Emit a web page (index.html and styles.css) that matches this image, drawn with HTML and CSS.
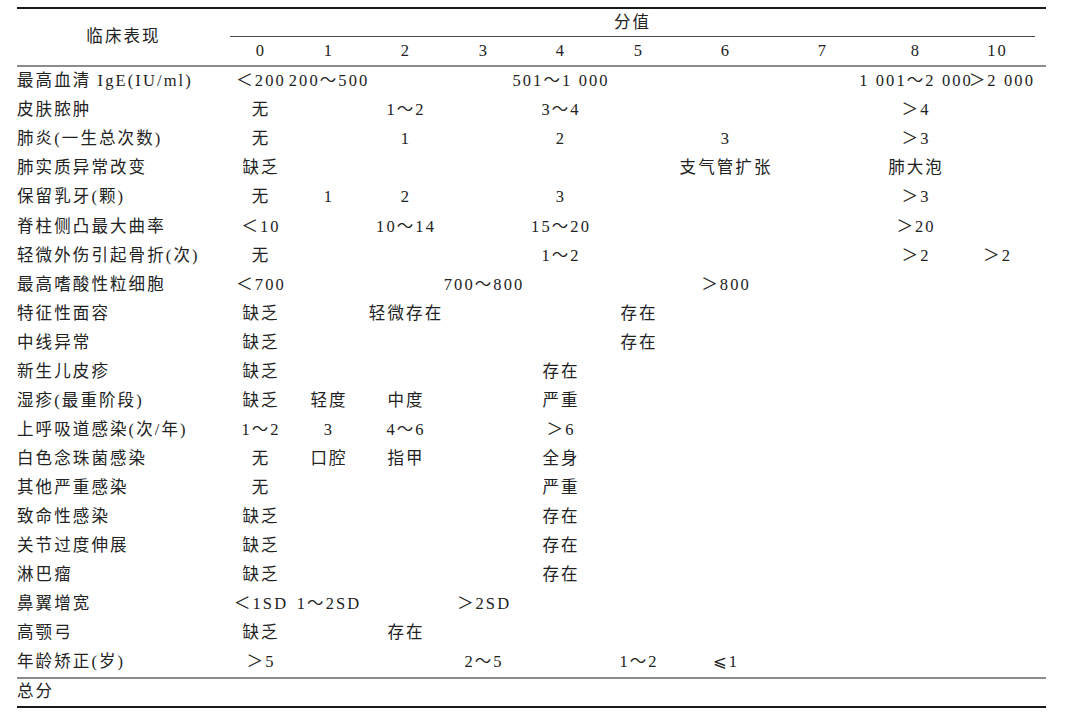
FILE: index.html
```html
<!DOCTYPE html>
<html lang="zh-CN">
<head>
<meta charset="utf-8">
<title>评分表</title>
<link rel="stylesheet" href="styles.css">
</head>
<body>
<div class="table">
  <div class="head">
    <div class="h-label">临床表现</div>
    <div class="h-group">分值</div>
    <div class="s c0">0</div>
    <div class="s c1">1</div>
    <div class="s c2">2</div>
    <div class="s c3">3</div>
    <div class="s c4">4</div>
    <div class="s c5">5</div>
    <div class="s c6">6</div>
    <div class="s c7">7</div>
    <div class="s c8">8</div>
    <div class="s c9">10</div>
  </div>
  <div class="body">
    <div class="row"><div class="label">最高血清 IgE(IU/ml)</div><div class="s c0">＜200</div><div class="s c1">200～500</div><div class="s c4">501～1 000</div><div class="s c8">1 001～2 000</div><div class="s c9 end">＞2 000</div></div>
    <div class="row"><div class="label">皮肤脓肿</div><div class="s c0">无</div><div class="s c2">1～2</div><div class="s c4">3～4</div><div class="s c8">＞4</div></div>
    <div class="row"><div class="label">肺炎(一生总次数)</div><div class="s c0">无</div><div class="s c2">1</div><div class="s c4">2</div><div class="s c6">3</div><div class="s c8">＞3</div></div>
    <div class="row"><div class="label">肺实质异常改变</div><div class="s c0">缺乏</div><div class="s c6">支气管扩张</div><div class="s c8">肺大泡</div></div>
    <div class="row"><div class="label">保留乳牙(颗)</div><div class="s c0">无</div><div class="s c1">1</div><div class="s c2">2</div><div class="s c4">3</div><div class="s c8">＞3</div></div>
    <div class="row"><div class="label">脊柱侧凸最大曲率</div><div class="s c0">＜10</div><div class="s c2">10～14</div><div class="s c4">15～20</div><div class="s c8">＞20</div></div>
    <div class="row"><div class="label">轻微外伤引起骨折(次)</div><div class="s c0">无</div><div class="s c4">1～2</div><div class="s c8">＞2</div><div class="s c9">＞2</div></div>
    <div class="row"><div class="label">最高嗜酸性粒细胞</div><div class="s c0">＜700</div><div class="s c3">700～800</div><div class="s c6">＞800</div></div>
    <div class="row"><div class="label">特征性面容</div><div class="s c0">缺乏</div><div class="s c2">轻微存在</div><div class="s c5">存在</div></div>
    <div class="row"><div class="label">中线异常</div><div class="s c0">缺乏</div><div class="s c5">存在</div></div>
    <div class="row"><div class="label">新生儿皮疹</div><div class="s c0">缺乏</div><div class="s c4">存在</div></div>
    <div class="row"><div class="label">湿疹(最重阶段)</div><div class="s c0">缺乏</div><div class="s c1">轻度</div><div class="s c2">中度</div><div class="s c4">严重</div></div>
    <div class="row"><div class="label">上呼吸道感染(次/年)</div><div class="s c0">1～2</div><div class="s c1">3</div><div class="s c2">4～6</div><div class="s c4">＞6</div></div>
    <div class="row"><div class="label">白色念珠菌感染</div><div class="s c0">无</div><div class="s c1">口腔</div><div class="s c2">指甲</div><div class="s c4">全身</div></div>
    <div class="row"><div class="label">其他严重感染</div><div class="s c0">无</div><div class="s c4">严重</div></div>
    <div class="row"><div class="label">致命性感染</div><div class="s c0">缺乏</div><div class="s c4">存在</div></div>
    <div class="row"><div class="label">关节过度伸展</div><div class="s c0">缺乏</div><div class="s c4">存在</div></div>
    <div class="row"><div class="label">淋巴瘤</div><div class="s c0">缺乏</div><div class="s c4">存在</div></div>
    <div class="row"><div class="label">鼻翼增宽</div><div class="s c0">＜1SD</div><div class="s c1">1～2SD</div><div class="s c3">＞2SD</div></div>
    <div class="row"><div class="label">高颚弓</div><div class="s c0">缺乏</div><div class="s c2">存在</div></div>
    <div class="row"><div class="label">年龄矫正(岁)</div><div class="s c0">＞5</div><div class="s c3">2～5</div><div class="s c5">1～2</div><div class="s c6">⩽1</div></div>
  </div>
  <div class="foot">
    <div class="label">总分</div>
  </div>
</div>
</body>
</html>
```

FILE: styles.css
```css
html, body {
  margin: 0;
  padding: 0;
  background: #ffffff;
}

body {
  font-family: "Liberation Serif", "Noto Sans CJK SC", "DejaVu Serif", "DejaVu Sans", serif;
  font-size: 16.5px;
  letter-spacing: 2.1px;
  color: #222222;
}

.table {
  --cols: 213px 60px 76px 78px 78px 76px 80px 94px 100px 86px 77px 11px;
  width: 1029px;
  margin: 7px 0 0 17px;
  border-top: 2px solid #1a1a1a;
  border-bottom: 2px solid #1a1a1a;
}

.head {
  display: grid;
  grid-template-columns: var(--cols);
  grid-template-rows: 28px 28px;
  border-bottom: 2px solid #8c8c8c;
  align-items: center;
}

.h-label {
  grid-column: 1;
  grid-row: 1 / 3;
  justify-self: center;
  line-height: 1;
}

.h-group {
  grid-column: 2 / 12;
  grid-row: 1;
  align-self: stretch;
  display: flex;
  align-items: center;
  justify-content: center;
  border-bottom: 1px solid #4a4a4a;
  line-height: 1;
  padding-top: 1px;
}

.head .s {
  grid-row: 2;
}

.row {
  display: grid;
  grid-template-columns: var(--cols);
  height: 29.05px;
  align-items: center;
}

.label {
  grid-column: 1;
  white-space: nowrap;
  line-height: 1;
}

.s {
  justify-self: center;
  white-space: nowrap;
  line-height: 1;
  padding-left: 2.1px;
}

.s.end {
  justify-self: end;
  padding-left: 0;
}

.c0 { grid-column: 2; }
.c1 { grid-column: 3; }
.c2 { grid-column: 4; }
.c3 { grid-column: 5; }
.c4 { grid-column: 6; }
.c5 { grid-column: 7; }
.c6 { grid-column: 8; }
.c7 { grid-column: 9; }
.c8 { grid-column: 10; }
.c9 { grid-column: 11; }

.foot {
  display: grid;
  grid-template-columns: var(--cols);
  height: 27px;
  align-items: center;
  border-top: 2px solid #8c8c8c;
}
```
